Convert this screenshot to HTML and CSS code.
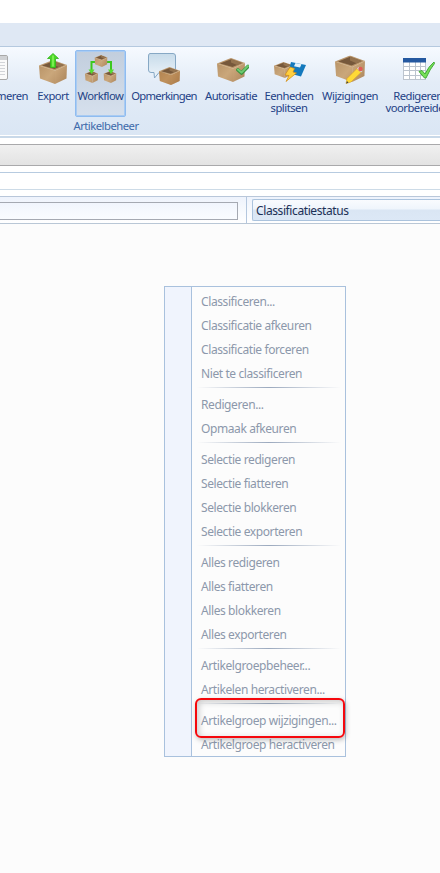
FILE: index.html
```html
<!DOCTYPE html>
<html lang="nl">
<head>
    <meta charset="UTF-8" />
    <meta name="viewport" content="width=device-width, initial-scale=1.0">
    <title>Artikelbeheer</title>
    <link rel="stylesheet" href="styles.css">
</head>
<body>

<svg class="defs" width="0" height="0">
    <defs>
        <linearGradient id="left" x1="0" y1="0" x2="1" y2="1">
            <stop offset="0" stop-color="#b99468" />
            <stop offset="0.6" stop-color="#caa77b" />
            <stop offset="1" stop-color="#bb956a" />
        </linearGradient>
        <linearGradient id="right" x1="0" y1="0" x2="1" y2="1">
            <stop offset="0" stop-color="#d0ac80" />
            <stop offset="1" stop-color="#aa845a" />
        </linearGradient>
        <linearGradient id="bubble" x1="0" y1="0" x2="0" y2="1">
            <stop offset="0" stop-color="#c7dbea" />
            <stop offset="1" stop-color="#edf4fa" />
        </linearGradient>
        <symbol id="box" viewBox="0 0 28 24" preserveAspectRatio="none">
            <path d="M0 5.5 L14 0 L28 5 L16 10.5 Z" fill="#b8946a" />
            <path d="M3 5.5 L14 1.2 L25 5 L15.5 9 Z" fill="#76583b" />
            <path d="M14 1.2 L25 5 L20 7 L14 4.5 Z" fill="#94734f" />
            <path d="M0 5.5 L16 10.5 V24 L1 18.5 Z" fill="url(#left)" />
            <path d="M16 10.5 L28 5 L27.5 18.5 L16 24 Z" fill="url(#right)" />
            <path d="M0 5.5 L16 10.5 L28 5" fill="none" stroke="#d4b488" stroke-width="0.5" />
        </symbol>
    </defs>
</svg>

<div class="title-bar"></div>

<div class="ribbon">
    <div class="ribbon-buttons">
        <div class="ribbon-btn first">
            <svg class="icon" width="36" height="36">
                <rect x="-1.5" y="5.5" width="21" height="24" rx="1.5" fill="#fafafa" stroke="#a8a8a8" />
                <rect x="-1" y="6" width="20" height="4" fill="#cfd1d4" />
                <path d="M1 12.5h16M1 15.5h16M1 18.5h16M1 21.5h16M1 24.5h16" stroke="#d2d4d8" />
            </svg>
            <span>meren</span>
        </div>
        <div class="ribbon-btn">
            <svg class="icon" width="36" height="36">
                <use href="#box" x="4" y="10" width="28" height="24" />
                <path d="M15.5 17.5 V8.5 H12.5 L18 3.5 L23.5 8.5 H20.5 V17.5 Z" fill="#48d825" stroke="#35b51c" stroke-width="0.8" />
                <path d="M18 5.5 V16.5" stroke="#8cf45f" stroke-width="1.5" />
            </svg>
            <span>Export</span>
        </div>
        <div class="ribbon-btn active">
            <svg class="icon" width="36" height="36">
                <path d="M14 12 H8.5 V21 M22 12 H28 V21" fill="none" stroke="#3cc81e" stroke-width="2" />
                <use href="#box" x="11.5" y="5" width="13" height="12" />
                <use href="#box" x="2" y="21" width="13" height="12" />
                <use href="#box" x="20.5" y="21" width="13" height="12" />
                <path d="M5.5 19.5 H11.5 L8.5 24 Z M25 19.5 H31 L28 24 Z" fill="#52df30" />
            </svg>
            <span>Workflow</span>
        </div>
        <div class="ribbon-btn tight">
            <svg class="icon" width="36" height="36">
                <path d="M4 3.5 H27 Q29.5 3.5 29.5 6 V20 Q29.5 22.5 27 22.5 H13 L8.5 28 L8 22.5 H5 Q2.5 22.5 2.5 20 V6 Q2.5 3.5 4 3.5 Z" fill="url(#bubble)" stroke="#86a8c5" />
                <use href="#box" x="13" y="17" width="21" height="18" />
                <path d="M13 21 L25 25 V35 L14 31 Z M25 25 L34 21 L33.5 31 L25 35 Z" fill="#a86824" opacity="0.35" />
            </svg>
            <span>Opmerkingen</span>
        </div>
        <div class="ribbon-btn">
            <svg class="icon" width="36" height="36">
                <use href="#box" x="4" y="8" width="28" height="24" />
                <path d="M25 20 L28.5 23 L35 16.5" fill="none" stroke="#38903f" stroke-width="3.6" stroke-linecap="round" stroke-linejoin="round" />
                <path d="M25 19.5 L28.5 22.5 L35 16" fill="none" stroke="#6cca70" stroke-width="2" stroke-linecap="round" stroke-linejoin="round" />
            </svg>
            <span>Autorisatie</span>
        </div>
        <div class="ribbon-btn">
            <svg class="icon" width="36" height="36">
                <use href="#box" x="3" y="12" width="19" height="16" />
                <path d="M20 12 L35 15 L30 26.5 L17 23 Z" fill="#1479bd" />
                <path d="M24.5 13 L30.5 14.2 L29 17.5 L23 16.3 Z" fill="#e1f0fa" />
                <path d="M19 17 L23.5 18.5 L22 22 L25.5 23 L15 31.5 L18 25.5 L14 25 Z" fill="#ffcf3e" stroke="#d08a13" stroke-width="0.7" />
            </svg>
            <span>Eenheden<br>splitsen</span>
        </div>
        <div class="ribbon-btn">
            <svg class="icon" width="36" height="36">
                <use href="#box" x="3" y="5.5" width="30" height="26.5" />
                <path d="M15 28.5 L25 18.5 L29 22.5 L19 32 L14 33.5 Z" fill="#ffd936" stroke="#d29c2a" stroke-width="0.6" />
                <path d="M25 18.5 L26.5 17 L30.5 21 L29 22.5 Z" fill="#d5dae0" />
                <circle cx="28.5" cy="19" r="2.2" fill="#e15b55" />
                <path d="M14 33.5 L15 31 L16.5 32.7 Z" fill="#444" />
            </svg>
            <span>Wijzigingen</span>
        </div>
        <div class="ribbon-btn">
            <svg class="icon" width="36" height="36">
                <rect x="3" y="8" width="23" height="22" fill="#fff" />
                <path d="M3.5 12V30M9.5 12V30M15.5 12V30M20.5 12V30M25.5 12V30M3 16.5H26M3 20.5H26M3 25.5H26M3 29.5H26" stroke="#bcc4ce" />
                <rect x="3" y="8" width="23" height="4.5" fill="#2458a0" />
                <path d="M19 21.5 L22 20.5 L25 24 Q28.5 16.5 34 12 L34.5 13.5 Q30 19 26 28 H24.5 Z" fill="#76e057" stroke="#42a936" />
            </svg>
            <span>Redigeren<br>voorbereiden</span>
        </div>
    </div>
    <div class="ribbon-group">Artikelbeheer</div>
</div>

<div class="grey-bar"></div>
<div class="empty-bar"></div>

<div class="filter-row">
    <div class="filter-cell">
        <div class="filter-input"></div>
    </div>
    <div class="combo">Classificatiestatus</div>
</div>

<div class="content">
    <div class="menu">
        <div class="menu-items">
            <div class="menu-item">Classificeren...</div>
            <div class="menu-item">Classificatie afkeuren</div>
            <div class="menu-item">Classificatie forceren</div>
            <div class="menu-item">Niet te classificeren</div>
            <div class="separator"></div>
            <div class="menu-item">Redigeren...</div>
            <div class="menu-item">Opmaak afkeuren</div>
            <div class="separator"></div>
            <div class="menu-item">Selectie redigeren</div>
            <div class="menu-item">Selectie fiatteren</div>
            <div class="menu-item">Selectie blokkeren</div>
            <div class="menu-item">Selectie exporteren</div>
            <div class="separator"></div>
            <div class="menu-item">Alles redigeren</div>
            <div class="menu-item">Alles fiatteren</div>
            <div class="menu-item">Alles blokkeren</div>
            <div class="menu-item">Alles exporteren</div>
            <div class="separator"></div>
            <div class="menu-item">Artikelgroepbeheer...</div>
            <div class="menu-item">Artikelen heractiveren...</div>
            <div class="separator"></div>
            <div class="menu-item">Artikelgroep wijzigingen...</div>
            <div class="menu-item">Artikelgroep heractiveren</div>
        </div>
        <div class="highlight"></div>
    </div>
</div>

</body>
</html>
```
FILE: styles.css
```css
* {
    box-sizing: border-box;
}

body {
    margin: 0;
    width: 440px;
    height: 873px;
    overflow: hidden;
    display: flex;
    flex-direction: column;
    background-color: #fff;
    font-family: "Noto Sans", "Open Sans", sans-serif;
    font-size: 12px;
    letter-spacing: -0.4px;
}

.defs {
    position: absolute;
}

.title-bar {
    height: 23px;
    margin-top: 23px;
    background-color: #dfe8f4;
    flex-shrink: 0;
}

.ribbon {
    height: 92px;
    border-top: 1px solid #b5c9df;
    border-bottom: 2px solid #c9d9e9;
    background: linear-gradient(#f6faff, #e3ecf7 40%, #dae6f4);
    box-shadow: inset 0 -1px #fff;
    padding-top: 3px;
    flex-shrink: 0;
    font-size: 11.25px;
    letter-spacing: -0.5px;
}

.ribbon-buttons {
    display: grid;
    grid-template-columns: 31px 44px 51px 76px 58px 58px 64px 72px;
    height: 67px;
}

.ribbon-btn {
    display: flex;
    flex-direction: column;
    align-items: center;
    color: #1e4286;
    line-height: 12px;
    text-align: center;
    white-space: nowrap;
}

.ribbon-btn.tight {
    letter-spacing: -0.7px;
}

.ribbon-btn.first {
    align-items: flex-end;
    padding-right: 3px;
}

.ribbon-btn.first .icon {
    margin-right: 4px;
}

.ribbon-btn.active {
    border: 1px solid #8fbcf0;
    border-radius: 2px;
    background: linear-gradient(#c2cedd, #d6e0ed);
    box-shadow: inset 0 0 0 1px #a9cbf2;
}

.ribbon-btn.active .icon {
    margin-top: -1px;
}

.icon {
    flex-shrink: 0;
    margin-bottom: 4px;
}

.ribbon-group {
    width: 212px;
    line-height: 18px;
    text-align: center;
    color: #3e6aaa;
}

.grey-bar {
    height: 22px;
    margin-top: 6px;
    border-top: 1px solid #a9a9ab;
    border-bottom: 1px solid #a9a9ab;
    background: linear-gradient(#f0f0f0, #e3e3e3);
    flex-shrink: 0;
}

.empty-bar {
    height: 18px;
    margin-top: 6px;
    border-top: 1px solid #b7cbe0;
    border-bottom: 1px solid #cddbe7;
    flex-shrink: 0;
}

.filter-row {
    display: flex;
    height: 28px;
    margin-top: 6px;
    border-top: 1px solid #b9c7da;
    border-bottom: 1px solid #b9c7d6;
    background: linear-gradient(#eef3fc, #fff);
    flex-shrink: 0;
}

.filter-cell {
    width: 247px;
    padding: 5px 8px 3px 0;
    border-right: 1px solid #b4c7de;
}

.filter-input {
    height: 18px;
    border: 1px solid #a5a9b2;
    border-left: none;
    background: linear-gradient(#f1f5fd, #fafcff);
}

.combo {
    flex: 1;
    height: 22px;
    margin: 2px 0 0 5px;
    padding-left: 3px;
    border: 1px solid #abc3dd;
    border-right: none;
    border-radius: 2px 0 0 2px;
    background: linear-gradient(#f9fbfe, #eff5fc 45%, #dae6f4 50%, #dce8f6);
    line-height: 22px;
    color: #1c3056;
}

.content {
    flex: 1;
    padding: 62px 0 0 164px;
    background-color: #fcfcfc;
}

.menu {
    position: relative;
    width: 182px;
    height: 471px;
    padding-left: 26px;
    border: 1px solid #a9c1dd;
    background-color: #f0f4fd;
}

.menu-items {
    height: 469px;
    padding-top: 2px;
    border-left: 1px solid #a9c1dd;
    background-color: #fcfcfc;
}

.menu-item {
    height: 24px;
    padding-left: 9px;
    line-height: 25px;
    color: #8c98ab;
    white-space: nowrap;
}

.separator {
    height: 1px;
    margin: 2px 4px 4px 5px;
    background: linear-gradient(to right, transparent, #9ba9be 50%, transparent);
}

/* marks the item for changing the article group */
.highlight {
    position: absolute;
    left: 30px;
    top: 411px;
    width: 150px;
    height: 40px;
    border: 2px solid #f5080d;
    border-radius: 6px;
    box-shadow: 1px 2px 5px rgba(0, 0, 0, 0.25), inset 2px 2px 6px rgba(0, 0, 0, 0.2);
}
```
